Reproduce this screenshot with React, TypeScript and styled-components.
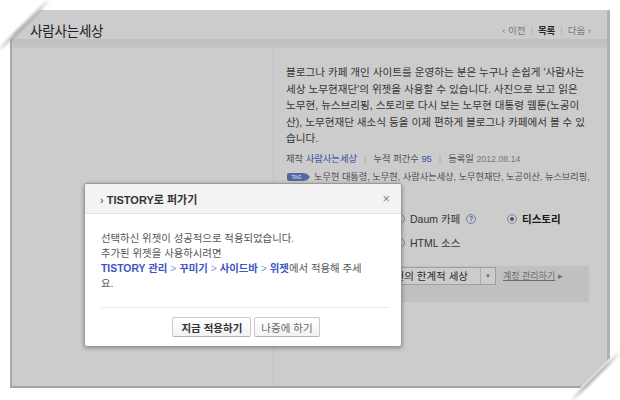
import styled, { createGlobalStyle } from "styled-components";

const GlobalStyle = createGlobalStyle`
  html, body {
    margin: 0;
    padding: 0;
    background: #ffffff;
  }
  body {
    font-family: "Liberation Sans", "Noto Sans CJK KR", sans-serif;
  }
  * {
    box-sizing: border-box;
  }
`;

const tags = ["노무현 대통령", "노무현", "사람사는세상", "노무현재단", "노공이산", "뉴스브리핑"];

const App = () => {
  return (
    <Frame>
      <GlobalStyle />
      <Page>
        <Header>
          <Title>사람사는세상</Title>
          <Nav>
            <NavLink>‹ 이전</NavLink>
            <NavSep>|</NavSep>
            <NavLink $strong>목록</NavLink>
            <NavSep>|</NavSep>
            <NavLink>다음 ›</NavLink>
          </Nav>
        </Header>
        <Body>
          <LeftCol />
          <RightCol>
            <Desc>
              블로그나 카페 개인 사이트를 운영하는 분은 누구나 손쉽게 '사람사는
              <br />
              세상 노무현재단'의 위젯을 사용할 수 있습니다. 사진으로 보고 읽은
              <br />
              노무현, 뉴스브리핑, 스토리로 다시 보는 노무현 대통령 웹툰(노공이
              <br />
              산), 노무현재단 새소식 등을 이제 편하게 블로그나 카페에서 볼 수 있
              <br />
              습니다.
            </Desc>
            <Meta>
              제작 <Blue>사람사는세상</Blue>
              <MetaSep>|</MetaSep>
              누적 퍼간수 <Blue>95</Blue>
              <MetaSep>|</MetaSep>
              등록일 <DateText>2012.08.14</DateText>
            </Meta>
            <Tags>
              <TagBadge>TAG</TagBadge>
              {tags.join(", ")},
            </Tags>
            <Options>
              <Option>
                <Radio />
                네이버 블로그
              </Option>
              <Option>
                <Radio />
                Daum 카페
                <Help>?</Help>
              </Option>
              <Option $strong>
                <Radio $checked />
                티스토리
              </Option>
              <Option>
                <Radio />
                Daum 블로그
              </Option>
              <Option>
                <Radio />
                HTML 소스
              </Option>
            </Options>
            <Panel>
              <Select>
                <SelectText>노무현의 한계적 세상</SelectText>
                <SelectArrow>▼</SelectArrow>
              </Select>
              <ManageLink>
                <u>계정 관리하기</u> ▸
              </ManageLink>
            </Panel>
          </RightCol>
        </Body>
        <Dim />
      </Page>

      <Modal>
        <ModalHeader>
          <ModalTitle>
            <Chevron>›</Chevron> TISTORY로 퍼가기
          </ModalTitle>
          <Close>×</Close>
        </ModalHeader>
        <ModalBody>
          선택하신 위젯이 성공적으로 적용되었습니다.
          <br />
          추가된 위젯을 사용하시려면
          <br />
          <Path>TISTORY 관리</Path> <PathSep>&gt;</PathSep> <Path>꾸미기</Path>{" "}
          <PathSep>&gt;</PathSep> <Path>사이드바</Path> <PathSep>&gt;</PathSep>{" "}
          <Path>위젯</Path>에서 적용해 주세
          <br />
          요.
        </ModalBody>
        <Divider />
        <ModalFooter>
          <Button $primary>지금 적용하기</Button>
          <Button>나중에 하기</Button>
        </ModalFooter>
      </Modal>

      <Folds viewBox="0 0 620 400" width="620" height="400">
        <defs>
          <filter id="soft" x="-20%" y="-20%" width="140%" height="140%">
            <feGaussianBlur stdDeviation="1.4" />
          </filter>
          <linearGradient id="tl" gradientUnits="userSpaceOnUse" x1="0" y1="50" x2="50" y2="0">
            <stop offset="0" stopColor="#777" stopOpacity="0.2" />
            <stop offset="0.35" stopColor="#777" stopOpacity="0.9" />
            <stop offset="0.8" stopColor="#777" stopOpacity="0.6" />
            <stop offset="1" stopColor="#777" stopOpacity="0" />
          </linearGradient>
          <linearGradient id="br" gradientUnits="userSpaceOnUse" x1="620" y1="350" x2="570" y2="400">
            <stop offset="0" stopColor="#777" stopOpacity="0" />
            <stop offset="0.3" stopColor="#777" stopOpacity="0.8" />
            <stop offset="0.7" stopColor="#777" stopOpacity="0.9" />
            <stop offset="1" stopColor="#777" stopOpacity="0.1" />
          </linearGradient>
        </defs>
        <polygon points="8,8 42,8 8,42" fill="#ffffff" />
        <line x1="0" y1="49" x2="49" y2="0" stroke="url(#tl)" strokeWidth="2.4" filter="url(#soft)" />
        <polygon points="612,356 612,392 576,392" fill="#ffffff" />
        <line x1="622" y1="350" x2="572" y2="400" stroke="url(#br)" strokeWidth="2.4" filter="url(#soft)" />
      </Folds>
    </Frame>
  );
};

const Frame = styled.div`
  position: relative;
  width: 620px;
  height: 400px;
  padding: 10px 10px 12px 10px;
  overflow: hidden;
`;

const Page = styled.div`
  position: relative;
  height: 100%;
  display: flex;
  flex-direction: column;
  background: #ffffff;
  border-left: 2px solid #d2d2d2;
  border-right: 3px solid #dcdcdc;
  border-bottom: 2px solid #d0d0d0;
`;

const Dim = styled.div`
  position: absolute;
  top: 0;
  left: -2px;
  right: -3px;
  bottom: -2px;
  background: rgba(0, 0, 0, 0.2);
`;

const Header = styled.header`
  flex-shrink: 0;
  height: 38px;
  display: flex;
  align-items: center;
  justify-content: space-between;
  padding: 2px 16px 0 18px;
  background: linear-gradient(#ffffff 0, #ffffff 29px, #efefef 29px, #f8f8f8 38px);
`;

const Title = styled.h1`
  margin: 0;
  font-size: 13.5px;
  font-weight: normal;
  color: #2a2a2a;
  letter-spacing: -0.2px;
`;

const Nav = styled.nav`
  display: flex;
  align-items: center;
  gap: 5px;
  font-size: 9.5px;
`;

const NavLink = styled.span<{ $strong?: boolean }>`
  color: ${(p) => (p.$strong ? "#333" : "#999")};
  font-weight: ${(p) => (p.$strong ? "bold" : "normal")};
`;

const NavSep = styled.span`
  color: #dddddd;
  font-size: 9px;
`;

const Body = styled.div`
  flex: 1;
  display: flex;
`;

const LeftCol = styled.div`
  width: 262px;
  flex-shrink: 0;
  border-right: 1px solid #f2f2f2;
`;

const RightCol = styled.div`
  flex: 1;
  padding: 16px 16px 0 12px;
`;

const Desc = styled.p`
  margin: 0;
  font-size: 10.6px;
  line-height: 16.5px;
  color: #444;
  white-space: nowrap;
`;

const Meta = styled.div`
  margin-top: 5px;
  font-size: 9.3px;
  line-height: 14px;
  color: #666;
  white-space: nowrap;
`;

const Blue = styled.span`
  color: #4a64c8;
`;

const MetaSep = styled.span`
  color: #d8d8d8;
  margin: 0 7px;
`;

const DateText = styled.span`
  color: #999;
  font-size: 8.8px;
`;

const Tags = styled.div`
  margin-top: 3px;
  display: flex;
  align-items: center;
  font-size: 9.2px;
  line-height: 16px;
  color: #666;
  white-space: nowrap;
`;

const TagBadge = styled.span`
  position: relative;
  display: inline-flex;
  align-items: center;
  justify-content: center;
  width: 19px;
  height: 8px;
  margin-left: 1px;
  margin-right: 8px;
  border-radius: 2px;
  background: #6a7fd0;
  color: #ffffff;
  font-size: 5px;
  font-weight: bold;
  &::after {
    content: "";
    position: absolute;
    right: -4px;
    top: 0;
    border-left: 4px solid #6a7fd0;
    border-top: 4px solid transparent;
    border-bottom: 4px solid transparent;
  }
`;

const Options = styled.div`
  margin-top: 22px;
  display: grid;
  grid-template-columns: 109px 112px auto;
  grid-auto-rows: 24px;
  align-items: center;
  font-size: 10.5px;
  color: #444;
`;

const Option = styled.label<{ $strong?: boolean }>`
  display: flex;
  align-items: center;
  gap: 3px;
  white-space: nowrap;
  font-weight: ${(p) => (p.$strong ? "bold" : "normal")};
  color: ${(p) => (p.$strong ? "#222" : "#444")};
`;

const Radio = styled.span<{ $checked?: boolean }>`
  position: relative;
  width: 10px;
  height: 10px;
  margin-right: 2px;
  border-radius: 50%;
  border: 1px solid #a8a8a8;
  background: #ffffff;
  &::after {
    content: "";
    display: ${(p) => (p.$checked ? "block" : "none")};
    position: absolute;
    left: 2px;
    top: 2px;
    width: 4px;
    height: 4px;
    border-radius: 50%;
    background: #4864c4;
  }
`;

const Help = styled.span`
  display: inline-flex;
  align-items: center;
  justify-content: center;
  width: 10px;
  height: 10px;
  margin-left: 3px;
  border-radius: 50%;
  border: 1px solid #8ea0dc;
  color: #5a73c8;
  font-size: 7px;
  font-weight: bold;
`;

const Panel = styled.div`
  margin-top: 11px;
  height: 36px;
  padding: 1px 0 0 2px;
  display: flex;
  align-items: flex-start;
  gap: 7px;
  background: #f1f1f1;
  margin-right: 2px;
`;

const Select = styled.div`
  display: flex;
  width: 208px;
  height: 18px;
  border: 1px solid #c8c8c8;
  background: #ffffff;
`;

const SelectText = styled.span`
  flex: 1;
  display: flex;
  align-items: center;
  justify-content: flex-end;
  padding-right: 12px;
  font-size: 10.5px;
  color: #333;
  white-space: nowrap;
  overflow: hidden;
`;

const SelectArrow = styled.span`
  width: 15px;
  display: flex;
  align-items: center;
  justify-content: center;
  border-left: 1px solid #d8d8d8;
  font-size: 6px;
  color: #888;
`;

const ManageLink = styled.span`
  line-height: 18px;
  font-size: 9px;
  color: #888;
  white-space: nowrap;
`;

const Modal = styled.div`
  position: absolute;
  left: 84px;
  top: 183px;
  width: 318px;
  background: #ffffff;
  border: 1px solid #9a9a9a;
  border-radius: 3px;
  box-shadow: 0 1px 4px rgba(0, 0, 0, 0.35);
  overflow: hidden;
  z-index: 2;
`;

const ModalHeader = styled.div`
  height: 30px;
  display: flex;
  align-items: center;
  justify-content: space-between;
  padding: 0 11px 0 15px;
  background: #f3f3f3;
  border-bottom: 1px solid #e2e2e2;
`;

const ModalTitle = styled.div`
  font-size: 11px;
  font-weight: bold;
  color: #333;
`;

const Chevron = styled.span`
  color: #777;
`;

const Close = styled.span`
  font-size: 13px;
  color: #888;
  line-height: 1;
`;

const ModalBody = styled.div`
  padding: 17px 12px 0 16px;
  font-size: 10.4px;
  line-height: 15px;
  color: #555;
  white-space: nowrap;
`;

const Path = styled.b`
  color: #3d55c4;
`;

const PathSep = styled.span`
  color: #8a9ad6;
`;

const Divider = styled.hr`
  margin: 16px 11px 0 16px;
  border: 0;
  border-top: 1px solid #ececec;
`;

const ModalFooter = styled.div`
  display: flex;
  justify-content: center;
  gap: 3px;
  padding: 9px 0 9px 6px;
`;

const Button = styled.button<{ $primary?: boolean }>`
  height: 20px;
  padding: 0 ${(p) => (p.$primary ? "8px" : "6px")};
  border: 1px solid #c9c9c9;
  border-bottom-color: #b4b4b4;
  border-radius: 2px;
  background: linear-gradient(#ffffff, #f2f2f2);
  font-family: "Liberation Sans", "Noto Sans CJK KR", sans-serif;
  font-size: 10.5px;
  font-weight: ${(p) => (p.$primary ? "bold" : "normal")};
  color: ${(p) => (p.$primary ? "#333" : "#666")};
`;

const Folds = styled.svg`
  position: absolute;
  left: 0;
  top: 0;
  pointer-events: none;
  z-index: 3;
`;

export default App;
